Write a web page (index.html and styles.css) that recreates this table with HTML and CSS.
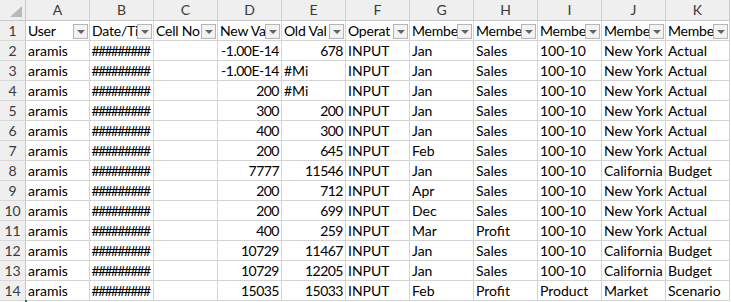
FILE: index.html
```html
<!DOCTYPE html>
<html>
<head>
<meta charset="utf-8">
<link rel="stylesheet" href="styles.css">
</head>
<body>
<div class="sheet">
  <div class="corner"><span class="tri"></span></div>
  <div class="ch">A</div><div class="ch">B</div><div class="ch">C</div><div class="ch">D</div><div class="ch">E</div><div class="ch">F</div><div class="ch">G</div><div class="ch">H</div><div class="ch">I</div><div class="ch">J</div><div class="ch">K</div>

  <div class="rh">1</div>
  <div class="c hd"><span class="ht">User</span><span class="fb"></span></div>
  <div class="c hd"><span class="ht">Date/Ti</span><span class="fb"></span></div>
  <div class="c hd"><span class="ht">Cell No</span><span class="fb"></span></div>
  <div class="c hd"><span class="ht">New Va</span><span class="fb"></span></div>
  <div class="c hd"><span class="ht">Old Val</span><span class="fb"></span></div>
  <div class="c hd"><span class="ht">Operat</span><span class="fb"></span></div>
  <div class="c hd"><span class="ht">Membe</span><span class="fb"></span></div>
  <div class="c hd"><span class="ht">Membe</span><span class="fb"></span></div>
  <div class="c hd"><span class="ht">Membe</span><span class="fb"></span></div>
  <div class="c hd"><span class="ht">Membe</span><span class="fb"></span></div>
  <div class="c hd"><span class="ht">Membe</span><span class="fb"></span></div>

  <div class="rh">2</div><div class="c">aramis</div><div class="c hs">#########</div><div class="c"></div><div class="c n">-1.00E-14</div><div class="c n">678</div><div class="c">INPUT</div><div class="c">Jan</div><div class="c">Sales</div><div class="c">100-10</div><div class="c">New York</div><div class="c">Actual</div>
  <div class="rh">3</div><div class="c">aramis</div><div class="c hs">#########</div><div class="c"></div><div class="c n">-1.00E-14</div><div class="c">#Mi</div><div class="c">INPUT</div><div class="c">Jan</div><div class="c">Sales</div><div class="c">100-10</div><div class="c">New York</div><div class="c">Actual</div>
  <div class="rh">4</div><div class="c">aramis</div><div class="c hs">#########</div><div class="c"></div><div class="c n">200</div><div class="c">#Mi</div><div class="c">INPUT</div><div class="c">Jan</div><div class="c">Sales</div><div class="c">100-10</div><div class="c">New York</div><div class="c">Actual</div>
  <div class="rh">5</div><div class="c">aramis</div><div class="c hs">#########</div><div class="c"></div><div class="c n">300</div><div class="c n">200</div><div class="c">INPUT</div><div class="c">Jan</div><div class="c">Sales</div><div class="c">100-10</div><div class="c">New York</div><div class="c">Actual</div>
  <div class="rh">6</div><div class="c">aramis</div><div class="c hs">#########</div><div class="c"></div><div class="c n">400</div><div class="c n">300</div><div class="c">INPUT</div><div class="c">Jan</div><div class="c">Sales</div><div class="c">100-10</div><div class="c">New York</div><div class="c">Actual</div>
  <div class="rh">7</div><div class="c">aramis</div><div class="c hs">#########</div><div class="c"></div><div class="c n">200</div><div class="c n">645</div><div class="c">INPUT</div><div class="c">Feb</div><div class="c">Sales</div><div class="c">100-10</div><div class="c">New York</div><div class="c">Actual</div>
  <div class="rh">8</div><div class="c">aramis</div><div class="c hs">#########</div><div class="c"></div><div class="c n">7777</div><div class="c n">11546</div><div class="c">INPUT</div><div class="c">Jan</div><div class="c">Sales</div><div class="c">100-10</div><div class="c">California</div><div class="c">Budget</div>
  <div class="rh">9</div><div class="c">aramis</div><div class="c hs">#########</div><div class="c"></div><div class="c n">200</div><div class="c n">712</div><div class="c">INPUT</div><div class="c">Apr</div><div class="c">Sales</div><div class="c">100-10</div><div class="c">New York</div><div class="c">Actual</div>
  <div class="rh">10</div><div class="c">aramis</div><div class="c hs">#########</div><div class="c"></div><div class="c n">200</div><div class="c n">699</div><div class="c">INPUT</div><div class="c">Dec</div><div class="c">Sales</div><div class="c">100-10</div><div class="c">New York</div><div class="c">Actual</div>
  <div class="rh">11</div><div class="c">aramis</div><div class="c hs">#########</div><div class="c"></div><div class="c n">400</div><div class="c n">259</div><div class="c">INPUT</div><div class="c">Mar</div><div class="c">Profit</div><div class="c">100-10</div><div class="c">New York</div><div class="c">Actual</div>
  <div class="rh">12</div><div class="c">aramis</div><div class="c hs">#########</div><div class="c"></div><div class="c n">10729</div><div class="c n">11467</div><div class="c">INPUT</div><div class="c">Jan</div><div class="c">Sales</div><div class="c">100-10</div><div class="c">California</div><div class="c">Budget</div>
  <div class="rh">13</div><div class="c">aramis</div><div class="c hs">#########</div><div class="c"></div><div class="c n">10729</div><div class="c n">12205</div><div class="c">INPUT</div><div class="c">Jan</div><div class="c">Sales</div><div class="c">100-10</div><div class="c">California</div><div class="c">Budget</div>
  <div class="rh">14</div><div class="c">aramis</div><div class="c hs">#########</div><div class="c"></div><div class="c n">15035</div><div class="c n">15033</div><div class="c">INPUT</div><div class="c">Feb</div><div class="c">Profit</div><div class="c">Product</div><div class="c">Market</div><div class="c">Scenario</div>
</div>
<div class="sel"></div>
</body>
</html>
```
FILE: styles.css
```css
html, body {
  margin: 0;
  padding: 0;
  background: #ffffff;
}
body {
  font-family: Lato, "Liberation Sans", sans-serif;
  font-size: 14px;
  color: #000;
  overflow: hidden;
  width: 731px;
  height: 302px;
  position: relative;
}
.sheet {
  display: grid;
  grid-template-columns: 26px repeat(11, 64px);
  grid-template-rows: 21px repeat(14, 20px);
  width: 730px;
}
.sheet > div {
  box-sizing: border-box;
  border-right: 1px solid #d4d4d4;
  border-bottom: 1px solid #d4d4d4;
  overflow: hidden;
  white-space: nowrap;
}
.corner {
  background: #efefef;
  position: relative;
  border-right-color: #c8c8c8 !important;
  border-bottom-color: #c8c8c8 !important;
}
.tri {
  position: absolute;
  left: 10px;
  top: 6px;
  width: 0;
  height: 0;
  border-left: 12px solid transparent;
  border-bottom: 11px solid #b9b9b9;
}
.ch {
  background: #efefef;
  color: #3a3a3a;
  text-align: center;
  line-height: 20px;
  border-right-color: #cfcfcf !important;
  border-bottom-color: #c8c8c8 !important;
}
.rh {
  background: #efefef;
  color: #3a3a3a;
  text-align: center;
  display: flex;
  align-items: flex-end;
  justify-content: center;
  line-height: 16px;
  padding-bottom: 1px;
  border-right-color: #c8c8c8 !important;
  border-bottom-color: #d9d9d9 !important;
}
.c {
  display: flex;
  align-items: flex-end;
  line-height: 16px;
  padding: 0 3px 1px 2px;
}
.n {
  justify-content: flex-end;
  letter-spacing: -0.5px;
  padding-left: 0;
  padding-right: 2px;
}
.hs {
  justify-content: center;
  letter-spacing: -1.7px;
  padding-right: 4px;
}
.hd {
  align-items: center;
  padding-right: 1px;
}
.ht {
  flex: 1;
  min-width: 0;
  overflow: hidden;
  white-space: nowrap;
  padding-top: 1px;
  letter-spacing: -0.2px;
}
.fb {
  flex: none;
  width: 15px;
  height: 15px;
  box-sizing: border-box;
  border: 1px solid #b5b5b5;
  background: #f2f2f2;
  position: relative;
  margin-top: 2px;
}
.fb::after {
  content: "";
  position: absolute;
  left: 3px;
  top: 5px;
  border-left: 4px solid transparent;
  border-right: 4px solid transparent;
  border-top: 4px solid #666;
}
.sel {
  position: absolute;
  left: 25px;
  top: 300px;
  width: 2px;
  height: 2px;
  background: #217346;
}
```
